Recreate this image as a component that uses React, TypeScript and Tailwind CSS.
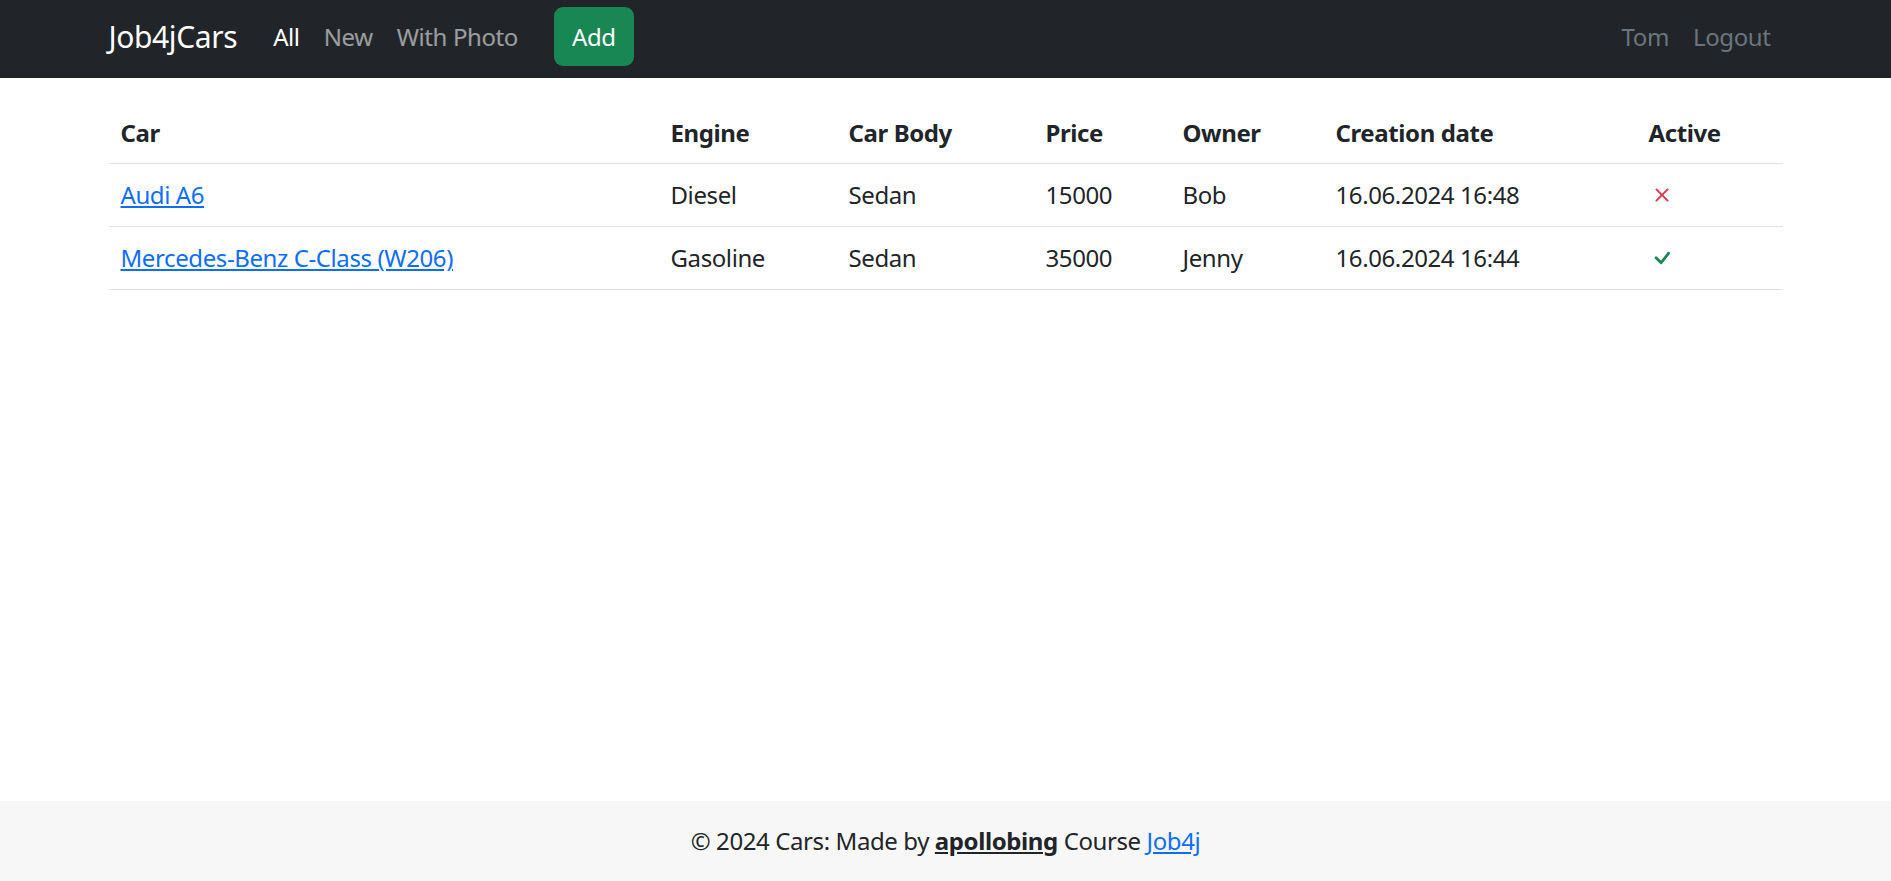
const cars = [
  {
    id: 1,
    name: 'Audi A6',
    engine: 'Diesel',
    body: 'Sedan',
    price: 15000,
    owner: 'Bob',
    created: '16.06.2024 16:48',
    active: false,
  },
  {
    id: 2,
    name: 'Mercedes-Benz C-Class (W206)',
    engine: 'Gasoline',
    body: 'Sedan',
    price: 35000,
    owner: 'Jenny',
    created: '16.06.2024 16:44',
    active: true,
  },
];

function XIcon() {
  return (
    <svg width="30" height="30" viewBox="0 0 16 16" fill="#dc3545">
      <path d="M4.646 4.646a.5.5 0 0 1 .708 0L8 7.293l2.646-2.647a.5.5 0 0 1 .708.708L8.707 8l2.647 2.646a.5.5 0 0 1-.708.708L8 8.707l-2.646 2.647a.5.5 0 0 1-.708-.708L7.293 8 4.646 5.354a.5.5 0 0 1 0-.708z" />
    </svg>
  );
}

function CheckIcon() {
  return (
    <svg width="30" height="30" viewBox="0 0 16 16" fill="#198754">
      <path d="M10.97 4.97a.75.75 0 0 1 1.071 1.05l-3.992 4.99a.75.75 0 0 1-1.08.02L4.324 8.384a.75.75 0 1 1 1.06-1.06l2.094 2.093 3.473-4.425a.267.267 0 0 1 .02-.022z" />
    </svg>
  );
}

export default function App() {
  return (
    <div className="flex flex-col min-h-[881px] bg-white text-[#212529] text-[24px] leading-[36px] tracking-[-0.4px] font-['Noto_Sans',sans-serif]">
      {/* 导航栏 */}
      <nav className="h-[78px] pb-[5px] bg-[#212529] flex items-center">
        <div className="w-[1710px] mx-auto px-[18px] flex items-center">
          <a href="#" className="text-white text-[30px] leading-[45px] mr-[24px]">Job4jCars</a>
          <a href="#" className="px-[12px] text-white">All</a>
          <a href="#" className="px-[12px] text-white/55">New</a>
          <a href="#" className="px-[12px] text-white/55">With Photo</a>
          <button className="ml-[24px] h-[59px] px-[18px] rounded-[9px] bg-[#198754] text-white">Add</button>
          <div className="ml-auto flex">
            <a href="#" className="px-[12px] text-[#6c757d]">Tom</a>
            <a href="#" className="px-[12px] text-[#6c757d]">Logout</a>
          </div>
        </div>
      </nav>

      {/* 车辆列表 */}
      <main className="w-[1710px] mx-auto px-[18px] pt-[24px]">
        <table className="w-full table-fixed border-collapse text-left">
          <thead>
            <tr className="border-b border-[#dee2e6]">
              <th className="w-[550px] px-[12px] pt-[13px] pb-[12px] font-bold">Car</th>
              <th className="w-[178px] px-[12px] pt-[13px] pb-[12px] font-bold">Engine</th>
              <th className="w-[197px] px-[12px] pt-[13px] pb-[12px] font-bold">Car Body</th>
              <th className="w-[137px] px-[12px] pt-[13px] pb-[12px] font-bold">Price</th>
              <th className="w-[153px] px-[12px] pt-[13px] pb-[12px] font-bold">Owner</th>
              <th className="w-[313px] px-[12px] pt-[13px] pb-[12px] font-bold">Creation date</th>
              <th className="px-[12px] pt-[13px] pb-[12px] font-bold">Active</th>
            </tr>
          </thead>
          <tbody>
            {cars.map(car => (
              <tr key={car.id} className="border-b border-[#dee2e6]">
                <td className="px-[12px] py-[13px]">
                  <a href="#" className="text-[#0d6efd] underline">{car.name}</a>
                </td>
                <td className="px-[12px] py-[13px]">{car.engine}</td>
                <td className="px-[12px] py-[13px]">{car.body}</td>
                <td className="px-[12px] py-[13px]">{car.price}</td>
                <td className="px-[12px] py-[13px]">{car.owner}</td>
                <td className="px-[12px] py-[13px]">{car.created}</td>
                <td className="px-[12px] py-[13px]">
                  <span className="flex h-[36px] items-center -ml-[2px]">
                    {car.active ? <CheckIcon /> : <XIcon />}
                  </span>
                </td>
              </tr>
            ))}
          </tbody>
        </table>
      </main>

      {/* 页脚 */}
      <footer className="mt-auto h-[80px] bg-[#f7f7f7] flex items-center justify-center">
        <span>
          © 2024 Cars: Made by{' '}
          <a href="#" className="font-bold underline text-[#212529]">apollobing</a>
          {' '}Course{' '}
          <a href="#" className="text-[#0d6efd] underline">Job4j</a>
        </span>
      </footer>
    </div>
  );
}
